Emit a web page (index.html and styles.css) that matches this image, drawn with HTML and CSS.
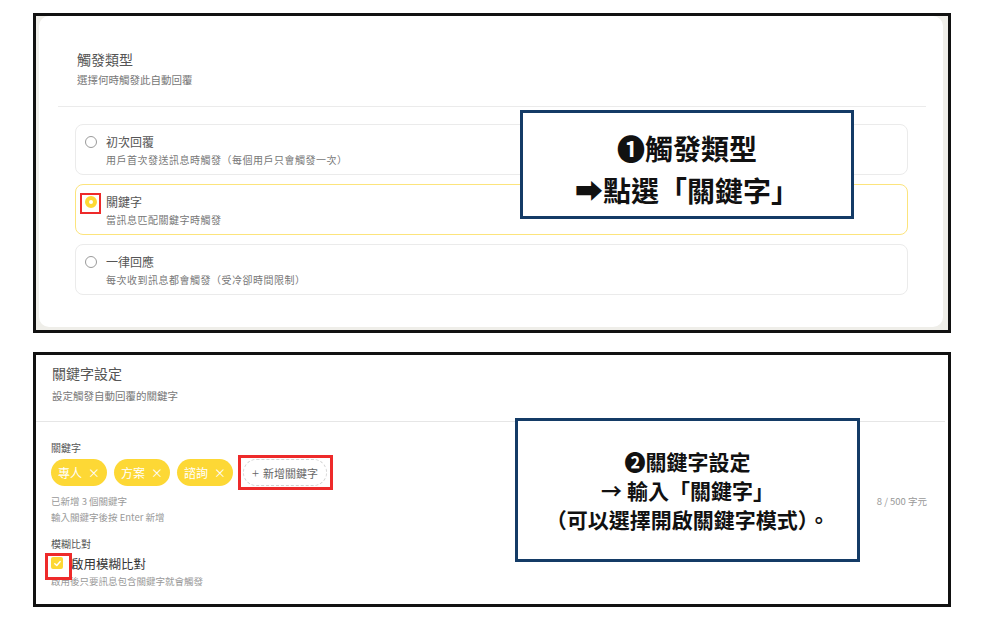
FILE: index.html
```html
<!DOCTYPE html>
<html lang="zh-Hant">
<head>
<meta charset="utf-8">
<title>自動回覆設定</title>
<link rel="stylesheet" href="styles.css">
</head>
<body>
<div class="frame frame-top">
  <div class="card">
    <div class="sec-head">
      <h2 class="sec-title">觸發類型</h2>
      <p class="sec-sub">選擇何時觸發此自動回覆</p>
    </div>
    <div class="options">
      <div class="option">
        <div class="opt-row"><span class="radio"></span><span class="opt-title">初次回覆</span></div>
        <div class="opt-desc">用戶首次發送訊息時觸發（每個用戶只會觸發一次）</div>
      </div>
      <div class="option selected">
        <div class="opt-row"><span class="radio on"></span><span class="opt-title">關鍵字</span></div>
        <div class="opt-desc">當訊息匹配關鍵字時觸發</div>
      </div>
      <div class="option">
        <div class="opt-row"><span class="radio"></span><span class="opt-title">一律回應</span></div>
        <div class="opt-desc">每次收到訊息都會觸發（受冷卻時間限制）</div>
      </div>
    </div>
  </div>
  <div class="note note-1">
    <div>❶觸發類型</div>
    <div>➡點選「關鍵字」</div>
  </div>
</div>

<div class="frame frame-bottom">
  <div class="sec-head2">
    <h2 class="sec-title">關鍵字設定</h2>
    <p class="sec-sub sub2">設定觸發自動回覆的關鍵字</p>
  </div>
  <div class="kw-body">
    <div class="label">關鍵字</div>
    <div class="tags">
      <span class="tag">專人<span class="x">×</span></span>
      <span class="tag">方案<span class="x">×</span></span>
      <span class="tag">諮詢<span class="x">×</span></span>
      <span class="add-wrap"><span class="add"><span class="plus">+</span>新增關鍵字</span></span>
    </div>
    <div class="hint-row">
      <div class="hint">已新增 3 個關鍵字</div>
      <div class="hint count">8 / 500 字元</div>
    </div>
    <div class="hint">輸入關鍵字後按 Enter 新增</div>
    <div class="label fuzzy">模糊比對</div>
    <div class="check-row">
      <span class="checkbox"><svg width="9" height="9" viewBox="0 0 10 10"><path d="M2 5.2 L4.2 7.2 L8 2.8" fill="none" stroke="#fff" stroke-width="1.6" stroke-linecap="round" stroke-linejoin="round"/></svg></span>
      <span class="check-label">啟用模糊比對</span>
    </div>
    <div class="hint">啟用後只要訊息包含關鍵字就會觸發</div>
  </div>
  <div class="note note-2">
    <div>❷關鍵字設定</div>
    <div>→ 輸入「關鍵字」</div>
    <div>（可以選擇開啟關鍵字模式）。</div>
  </div>
</div>
</body>
</html>
```

FILE: styles.css
```css
* { box-sizing: border-box; }
body {
  margin: 0;
  background: #fff;
  font-family: "Noto Sans CJK TC", "Noto Sans", sans-serif;
  color: #555;
}
h2, p { margin: 0; font-weight: 400; }

.frame {
  position: relative;
  margin-left: 33px;
  width: 918px;
  border: 3px solid #111;
}
.frame-top {
  margin-top: 13px;
  height: 320px;
  background: #efeee9;
  padding: 0 5px 3px 3px;
  display: flex;
}
.card {
  flex: 1;
  background: #fff;
  border-radius: 10px;
  padding: 0 17px 0 19px;
}
.sec-head {
  height: 91px;
  padding: 33px 0 0 19px;
  border-bottom: 1px solid #ebebeb;
}
.sec-title {
  font-size: 14px;
  line-height: 20px;
  color: #555;
}
.sec-sub {
  margin-top: 3px;
  font-size: 10.5px;
  line-height: 16px;
  color: #777;
}
.options {
  padding: 17px 18px 0 17px;
  display: flex;
  flex-direction: column;
  gap: 9px;
}
.option {
  height: 51px;
  border: 1px solid #ebebeb;
  border-radius: 8px;
  padding: 9px 0 0 9px;
}
.option.selected { border-color: #fce47c; }
.opt-row {
  display: flex;
  align-items: center;
  gap: 9px;
  height: 16px;
}
.radio {
  position: relative;
  width: 12px;
  height: 12px;
  border-radius: 50%;
  border: 1px solid #9a9a9a;
  background: #fff;
  flex: none;
}
.radio.on {
  border: 4px solid #fdd835;
}
.radio.on::after {
  content: "";
  position: absolute;
  left: -9px;
  top: -7px;
  width: 17px;
  height: 17px;
  border: 2px solid #ee2a2a;
}
.opt-title {
  font-size: 12px;
  line-height: 16px;
  color: #555;
}
.opt-desc {
  margin: 3px 0 0 21px;
  font-size: 10px;
  line-height: 14px;
  letter-spacing: 0.5px;
  color: #777;
}

.note {
  position: absolute;
  background: #fff;
  border: 3px solid #143b66;
  color: #111;
  font-weight: 700;
  text-align: center;
  display: flex;
  flex-direction: column;
  justify-content: center;
}
.note-1 {
  left: 484px;
  top: 94px;
  width: 334px;
  height: 109px;
  padding-top: 8px;
  font-size: 28px;
  line-height: 42px;
}
.note-2 {
  left: 479px;
  top: 63px;
  width: 345px;
  height: 144px;
  font-size: 21px;
  line-height: 29px;
}

.frame-bottom {
  margin-top: 19px;
  height: 255px;
  background: #fff;
}
.sec-head2 {
  height: 67px;
  padding: 8px 0 0 16px;
  margin-right: 3px;
  border-bottom: 1px solid #e6e6e6;
}
.sub2 { margin-top: 5px; }
.kw-body {
  padding: 19px 21px 0 15px;
}
.label {
  font-size: 10px;
  line-height: 14px;
  color: #555;
}
.tags {
  margin-top: 4px;
  display: flex;
  align-items: center;
  gap: 7px;
}
.tag {
  width: 56px;
  height: 27px;
  border-radius: 14px;
  background: #fdd835;
  color: #fff;
  font-size: 12px;
  display: flex;
  align-items: center;
  justify-content: center;
  gap: 6px;
}
.tag .x { font-size: 12px; }
.add-wrap {
  margin-left: -2px;
  border: 3px solid #ee2a2a;
  padding: 1px 3px 1px 2px;
  margin-top: -4px;
  margin-bottom: -4px;
}
.add {
  height: 27px;
  width: 84px;
  border: 1px dashed #d4d4d4;
  border-radius: 14px;
  display: flex;
  align-items: center;
  justify-content: center;
  font-size: 11px;
  color: #666;
}
.plus {
  font-size: 13px;
  font-weight: 300;
  margin-right: 4px;
}
.hint-row {
  margin-top: 7px;
  display: flex;
  justify-content: space-between;
}
.hint {
  font-size: 9.5px;
  line-height: 16px;
  color: #999;
}
.fuzzy { margin-top: 12px; }
.check-row {
  margin-top: 2px;
  display: flex;
  align-items: center;
  gap: 6px;
  height: 20px;
}
.checkbox {
  position: relative;
  width: 12px;
  height: 12px;
  border-radius: 2px;
  background: #fdd835;
  display: flex;
  align-items: center;
  justify-content: center;
}
.checkbox::after {
  content: "";
  position: absolute;
  left: -6px;
  top: -4px;
  width: 21px;
  height: 21px;
  border: 3px solid #ee2a2a;
}
.check-label {
  margin-left: 2px;
  font-size: 12.5px;
  color: #333;
}
```
